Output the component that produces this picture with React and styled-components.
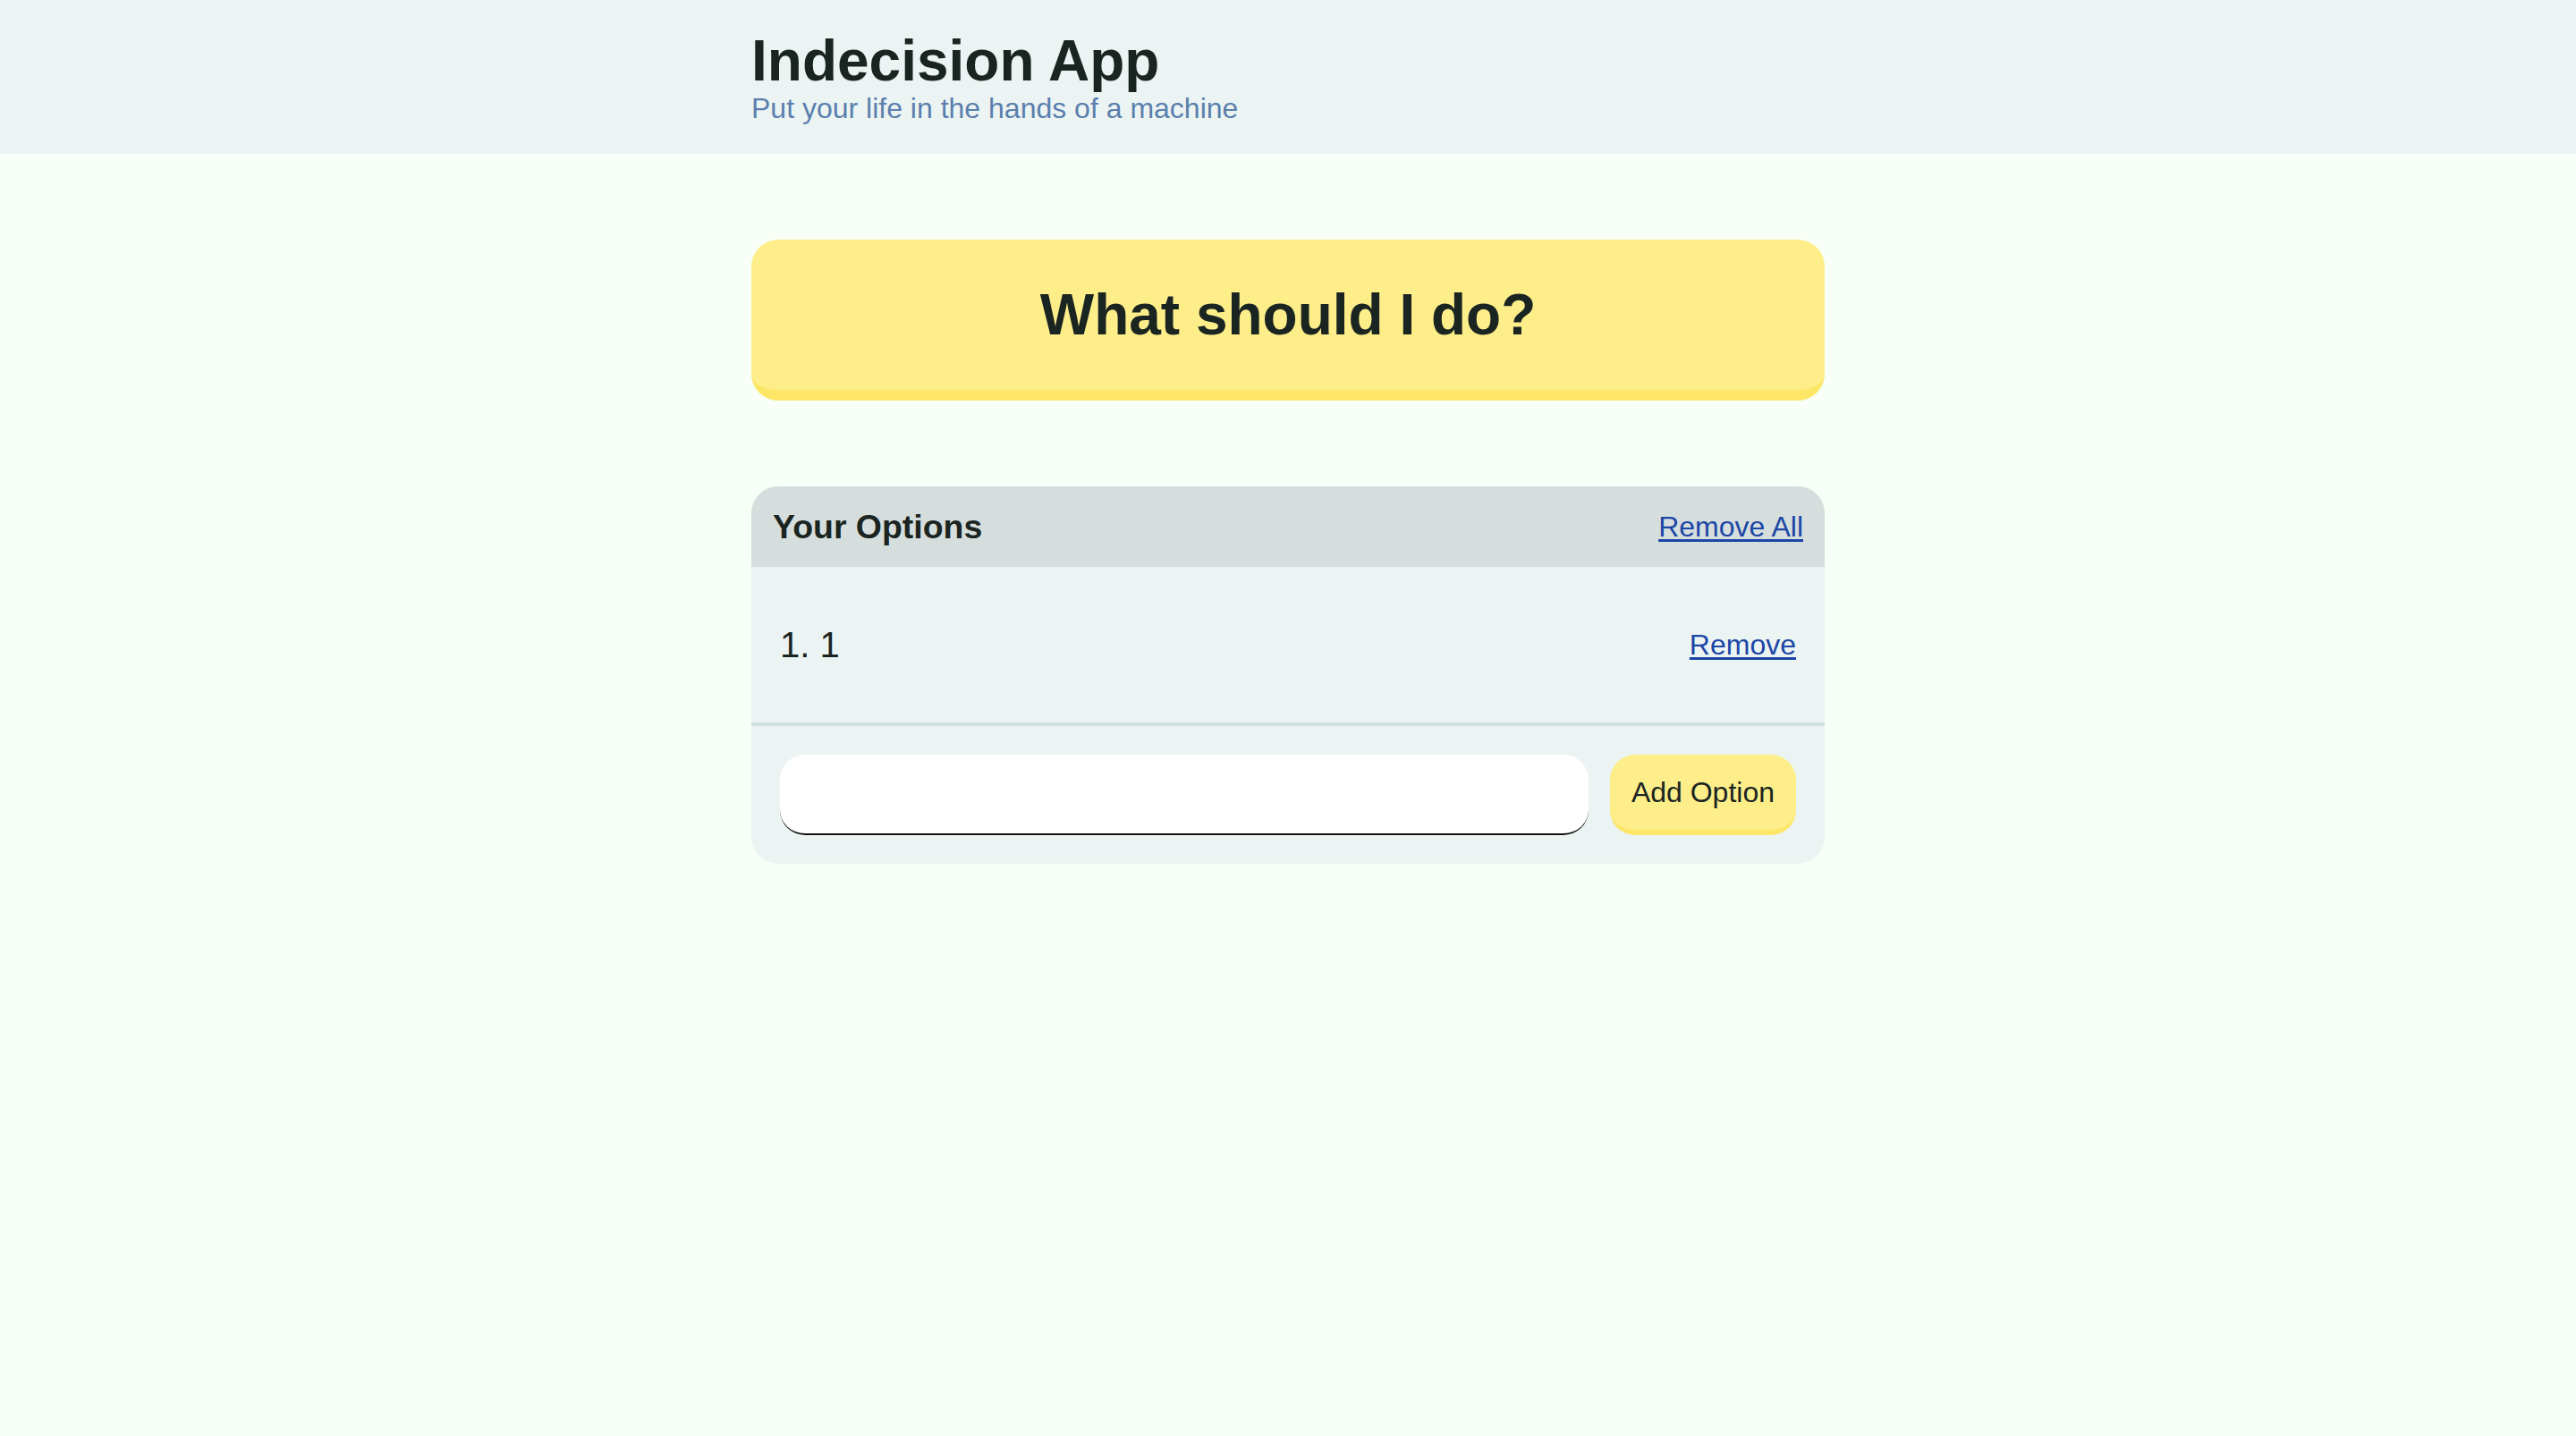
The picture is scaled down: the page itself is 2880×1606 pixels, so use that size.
import React from "react";
import styled, { createGlobalStyle } from "styled-components";

const GlobalStyle = createGlobalStyle`
  html, body {
    margin: 0;
    padding: 0;
  }
  body {
    background: #f7fff7;
    color: #1a2421;
    font-family: "Liberation Sans", Arial, Helvetica, sans-serif;
    font-size: 32px;
    min-height: 100vh;
  }
  * {
    box-sizing: border-box;
  }
`;

const App = () => {
  const [options, setOptions] = React.useState(["1"]);
  const [value, setValue] = React.useState("");

  const addOption = (e) => {
    e.preventDefault();
    const option = value.trim();
    if (!option) return;
    setOptions([...options, option]);
    setValue("");
  };

  const pick = () => {
    if (!options.length) return;
    const idx = Math.floor(Math.random() * options.length);
    alert(options[idx]);
  };

  return (
    <>
      <GlobalStyle />
      <Header>
        <Container>
          <Title>Indecision App</Title>
          <Subtitle>Put your life in the hands of a machine</Subtitle>
        </Container>
      </Header>
      <Container>
        <BigButton onClick={pick} disabled={!options.length}>
          What should I do?
        </BigButton>
        <Widget>
          <WidgetHeader>
            <WidgetTitle>Your Options</WidgetTitle>
            <LinkButton onClick={() => setOptions([])}>Remove All</LinkButton>
          </WidgetHeader>
          {options.map((option, i) => (
            <Option key={option + i}>
              <OptionText>
                {i + 1}. {option}
              </OptionText>
              <LinkButton
                onClick={() => setOptions(options.filter((_, j) => j !== i))}
              >
                Remove
              </LinkButton>
            </Option>
          ))}
          <AddForm onSubmit={addOption}>
            <Input value={value} onChange={(e) => setValue(e.target.value)} />
            <Button type="submit">Add Option</Button>
          </AddForm>
        </Widget>
      </Container>
    </>
  );
};

export default App;

const Header = styled.header`
  background: #ecf4f3;
  padding: 32px 0 34px;
  margin-bottom: 96px;
`;

const Container = styled.div`
  max-width: 1200px;
  margin: 0 auto;
`;

const Title = styled.h1`
  margin: 0;
  font-size: 64px;
  line-height: 72px;
  font-weight: 700;
  color: #1a2421;
`;

const Subtitle = styled.h2`
  margin: 0;
  font-size: 32px;
  line-height: 34px;
  font-weight: 400;
  color: #5a7fad;
`;

const BigButton = styled.button`
  display: block;
  width: 100%;
  margin: 0 0 96px;
  padding: 48px;
  border: none;
  border-bottom: 12px solid #fde668;
  border-radius: 30px;
  background: #fdee8a;
  color: #1a2421;
  font-family: inherit;
  font-size: 64px;
  line-height: 72px;
  font-weight: 700;
  cursor: pointer;
`;

const Widget = styled.div`
  background: #ecf4f3;
  border-radius: 30px;
  overflow: hidden;
  margin-bottom: 96px;
`;

const WidgetHeader = styled.div`
  display: flex;
  align-items: center;
  justify-content: space-between;
  height: 90px;
  padding: 0 24px;
  background: #d6dedd;
`;

const WidgetTitle = styled.h3`
  margin: 0;
  font-size: 37.44px;
  font-weight: 700;
  color: #1a2421;
`;

const LinkButton = styled.button`
  background: none;
  border: none;
  padding: 0;
  color: #1b46a6;
  font-family: inherit;
  font-size: 32px;
  text-decoration: underline;
  text-underline-offset: 3px;
  cursor: pointer;
`;

const Option = styled.div`
  display: flex;
  align-items: center;
  justify-content: space-between;
  padding: 64px 32px;
  border-bottom: 4px solid #cfe1e2;
`;

const OptionText = styled.p`
  margin: 0;
  font-size: 40px;
  line-height: 46px;
  color: #1a2421;
`;

const AddForm = styled.form`
  display: flex;
  padding: 32px;
`;

const Input = styled.input`
  flex-grow: 1;
  height: 90px;
  margin: 0 24px 0 0;
  padding: 0 24px;
  background: #ffffff;
  border: none;
  border-bottom: 2px solid #111;
  border-radius: 28px;
  font-family: inherit;
  font-size: 32px;
  color: #1a2421;
  outline: none;
`;

const Button = styled.button`
  padding: 0 24px;
  background: #fdee8a;
  border: none;
  border-bottom: 6px solid #fde668;
  border-radius: 28px;
  color: #1a2421;
  font-family: inherit;
  font-size: 32px;
  cursor: pointer;
`;
